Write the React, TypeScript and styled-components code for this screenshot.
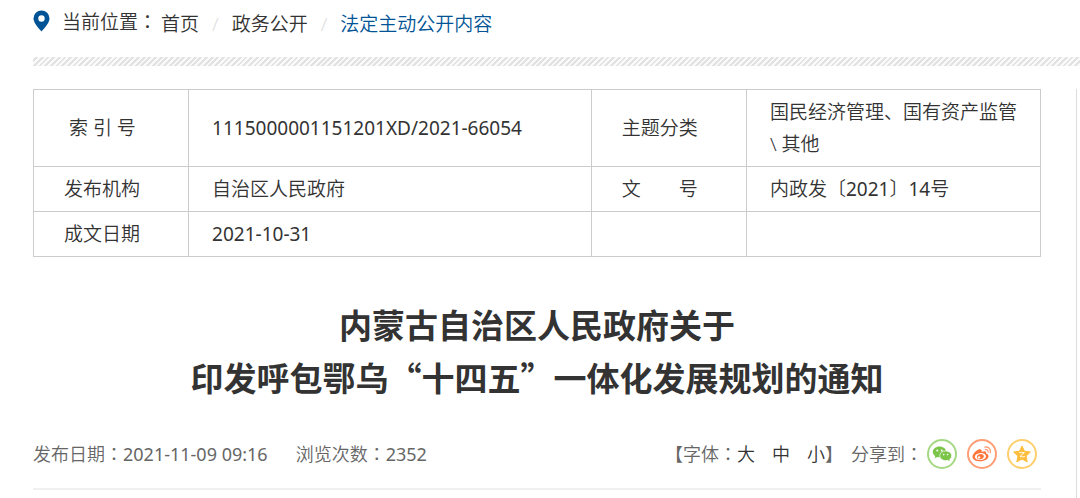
import React from "react";
import styled, { createGlobalStyle } from "styled-components";

const GlobalStyle = createGlobalStyle`
  * { box-sizing: border-box; }
  body {
    margin: 0;
    background: #fff;
    color: #333;
    font-family: "Noto Sans", "Noto Sans CJK SC", sans-serif;
    font-size: 19px;
    line-height: 32px;
    font-weight: 350;
  }
`;

const Page = styled.div`
  min-height: 100vh;
  padding-left: 33px;
  display: flex;
  flex-direction: column;
`;

const Breadcrumb = styled.nav`
  display: flex;
  align-items: flex-start;
  height: 57px;
  padding-top: 5px;
  white-space: nowrap;
`;

const Pin = styled.svg`
  width: 17px;
  height: 22px;
  margin: 5px 12px 0 0;
`;

const Colon = styled.span`
  font-family: "Noto Sans CJK TC", sans-serif;
`;

const Digits = styled.span`
  font-weight: 400;
`;

const CrumbList = styled.ol`
  display: flex;
  margin: 0 0 0 4px;
  padding: 3px 0 0;
  list-style: none;
`;

const Crumb = styled.li`
  & + &::before {
    content: "/";
    padding: 0 13px;
    color: #ddd;
  }
`;

const CrumbLink = styled.a<{ $current?: boolean }>`
  color: ${(p) => (p.$current ? "#005496" : "#333")};
  text-decoration: none;
`;

const Hatch = styled.div`
  height: 9px;
  background: repeating-linear-gradient(135deg, #fafafa 0 2px, #e2e2e2 2px 4px);
`;

const Columns = styled.div`
  flex: 1;
  display: flex;
  margin-top: 23px;
`;

const Main = styled.main`
  flex: 1;
  margin-right: 35px;
`;

const Side = styled.aside`
  width: 4px;
  border-left: 1px solid #ddd;
`;

const InfoTable = styled.table`
  width: 100%;
  table-layout: fixed;
  border-collapse: collapse;
`;

const LabelCol = styled.col`
  width: 15.4%;
`;

const WideCol = styled.col`
  width: 40%;
`;

const Label = styled.th`
  border: 1px solid #ccc;
  padding: 6px 16px 6px 30px;
  text-align: left;
  font-weight: inherit;
  white-space: pre;
`;

const Value = styled.td`
  border: 1px solid #ccc;
  padding: 6px 23px;
`;

const Title = styled.h1`
  margin: 41px 0 0;
  text-align: center;
  font-family: "Noto Sans CJK SC", sans-serif;
  font-size: 33px;
  line-height: 53px;
  font-weight: 700;
`;

const Meta = styled.div`
  display: flex;
  align-items: center;
  justify-content: space-between;
  margin-top: 34px;
  padding-bottom: 19px;
  border-bottom: 2px solid #f0f0f0;
  font-size: 18px;
  line-height: 30px;
  color: #666;
  white-space: nowrap;
`;

const Group = styled.div<{ $gap: number }>`
  display: flex;
  align-items: center;
  gap: ${(p) => p.$gap}px;
`;

const SizeButton = styled.button`
  border: 0;
  padding: 0;
  background: none;
  font: inherit;
  color: #333;
  & + & { margin-left: 17px; }
`;

const Share = styled.div`
  display: flex;
  gap: 10px;
  margin: 0 4px 0 -4px;
`;

const ShareButton = styled.button<{ $color: string; $ring: string }>`
  display: grid;
  place-items: center;
  width: 30px;
  height: 30px;
  padding: 0;
  border: 2px solid ${(p) => p.$ring};
  border-radius: 50%;
  background: #fff;
  color: ${(p) => p.$color};
`;

const Icon = styled.svg`
  width: 20px;
  height: 20px;
  display: block;
`;

export default function App() {
  return (
    <>
      <GlobalStyle />
      <Page>
        <Breadcrumb aria-label="当前位置">
          <Pin viewBox="0 0 17 22" aria-hidden="true">
            <path fillRule="evenodd" fill="#005496" d="M8.500 0.500a8 8 0 0 1 8 8c0 4-4 8.500-8 13-4-4.500-8-9-8-13a8 8 0 0 1 8-8zM8.500 5.300a3.200 3.200 0 1 0 0 6.400 3.200 3.200 0 0 0 0-6.400z" />
          </Pin>
          <span>当前位置<Colon>：</Colon></span>
          <CrumbList>
            <Crumb><CrumbLink href="#home">首页</CrumbLink></Crumb>
            <Crumb><CrumbLink href="#affairs">政务公开</CrumbLink></Crumb>
            <Crumb><CrumbLink href="#content" $current>法定主动公开内容</CrumbLink></Crumb>
          </CrumbList>
        </Breadcrumb>
        <Hatch />
        <Columns>
          <Main>
            <InfoTable>
              <colgroup>
                <LabelCol />
                <WideCol />
                <LabelCol />
                <col />
              </colgroup>
              <tbody>
                <tr>
                  <Label scope="row"> 索 引 号</Label>
                  <Value><Digits>1115000001151201XD/2021-66054</Digits></Value>
                  <Label scope="row">主题分类</Label>
                  <Value>国民经济管理、国有资产监管 \ 其他</Value>
                </tr>
                <tr>
                  <Label scope="row">发布机构</Label>
                  <Value>自治区人民政府</Value>
                  <Label scope="row">文　　号</Label>
                  <Value>内政发〔<Digits>2021</Digits>〕<Digits>14</Digits>号</Value>
                </tr>
                <tr>
                  <Label scope="row">成文日期</Label>
                  <Value><Digits>2021-10-31</Digits></Value>
                  <Value />
                  <Value />
                </tr>
              </tbody>
            </InfoTable>
            <Title>
              内蒙古自治区人民政府关于
              <br />
              印发呼包鄂乌“十四五”一体化发展规划的通知
            </Title>
            <Meta>
              <Group $gap={28}>
                <span>发布日期<Colon>：</Colon><Digits>2021-11-09 09:16</Digits></span>
                <span>浏览次数<Colon>：</Colon><Digits>2352</Digits></span>
              </Group>
              <Group $gap={8}>
                <span>
                  【字体<Colon>：</Colon>
                  <SizeButton>大</SizeButton>
                  <SizeButton>中</SizeButton>
                  <SizeButton>小</SizeButton>】
                </span>
                <span>分享到<Colon>：</Colon></span>
                <Share>
                  <ShareButton $color="#7bc549" $ring="#a5d884" aria-label="微信">
                    <Icon viewBox="0 0 20 20" aria-hidden="true">
                      <path fill="currentColor" d="M7.500 2.500C3.800 2.500 0.800 4.900 0.800 8c0 1.700 1 3.200 2.500 4.200L2.700 14.300l2.500-1.300c.8.2 1.500.3 2.300.3 3.700 0 6.700-2.400 6.700-5.400S11.200 2.500 7.500 2.500z" />
                      <ellipse cx="13.700" cy="11.800" rx="6" ry="4.900" fill="currentColor" stroke="#fff" strokeWidth=".7" />
                      <path fill="currentColor" d="M15.500 15.800l2.200 1.400-.4-2.600z" />
                      <g fill="#fff"><circle cx="5.300" cy="6.500" r="1" /><circle cx="9.700" cy="6.500" r="1" /><circle cx="11.700" cy="10.600" r=".8" /><circle cx="15.600" cy="10.600" r=".8" /></g>
                    </Icon>
                  </ShareButton>
                  <ShareButton $color="#ff763b" $ring="#ff9d75" aria-label="微博">
                    <Icon viewBox="0 0 20 20" aria-hidden="true">
                      <path fill="currentColor" fillRule="evenodd" d="M7.500 5.300C4.800 5.800.5 9.800.5 12.700c0 2.900 3.800 4.600 7.700 4.600 4.600 0 8.300-2.500 8.300-5 0-1.600-1.300-2.400-2.500-2.700.6-1.800-.4-3.300-4.400-1.700.6-1.800-.3-2.900-2.100-2.600zM8.200 9c3.300-.3 5.800 1.200 5.800 3.300s-2.500 3.700-5.600 3.800c-3.300.1-5.600-1.300-5.600-3.300S5.100 9.300 8.200 9z" />
                      <path fill="currentColor" fillRule="evenodd" d="M8.500 9.900c2.200 0 3.600 1.200 3.400 2.700-.2 1.600-2.200 2.700-4.200 2.600-1.900-.1-3.100-1.300-2.800-2.800.2-1.400 1.800-2.500 3.600-2.500zM7 12.200a1.300 1.200 0 1 0 .1 0z" />
                      <path fill="none" stroke="#ff9d75" strokeWidth="1.300" strokeLinecap="round" d="M12.800 3.200c3.500-.9 6.400 1.700 5.500 5.500M13.300 5.700c1.800-.5 3.200.8 2.700 2.500" />
                    </Icon>
                  </ShareButton>
                  <ShareButton $color="#fdbe3d" $ring="#fdcf6d" aria-label="QQ空间">
                    <Icon viewBox="0 0 20 20" aria-hidden="true">
                      <path fill="currentColor" stroke="currentColor" strokeLinejoin="round" d="M10 2l2.500 5.300 5.900.7-4.300 4 1.100 5.900L10 15l-5.200 2.900L5.900 12 1.600 8l5.900-.7z" />
                      <path fill="none" stroke="#fff" strokeWidth=".9" d="M7.200 8.600h5.200l-4.400 3.900c1.600.4 3.200.4 4.900.1" />
                    </Icon>
                  </ShareButton>
                </Share>
              </Group>
            </Meta>
          </Main>
          <Side />
        </Columns>
      </Page>
    </>
  );
}
